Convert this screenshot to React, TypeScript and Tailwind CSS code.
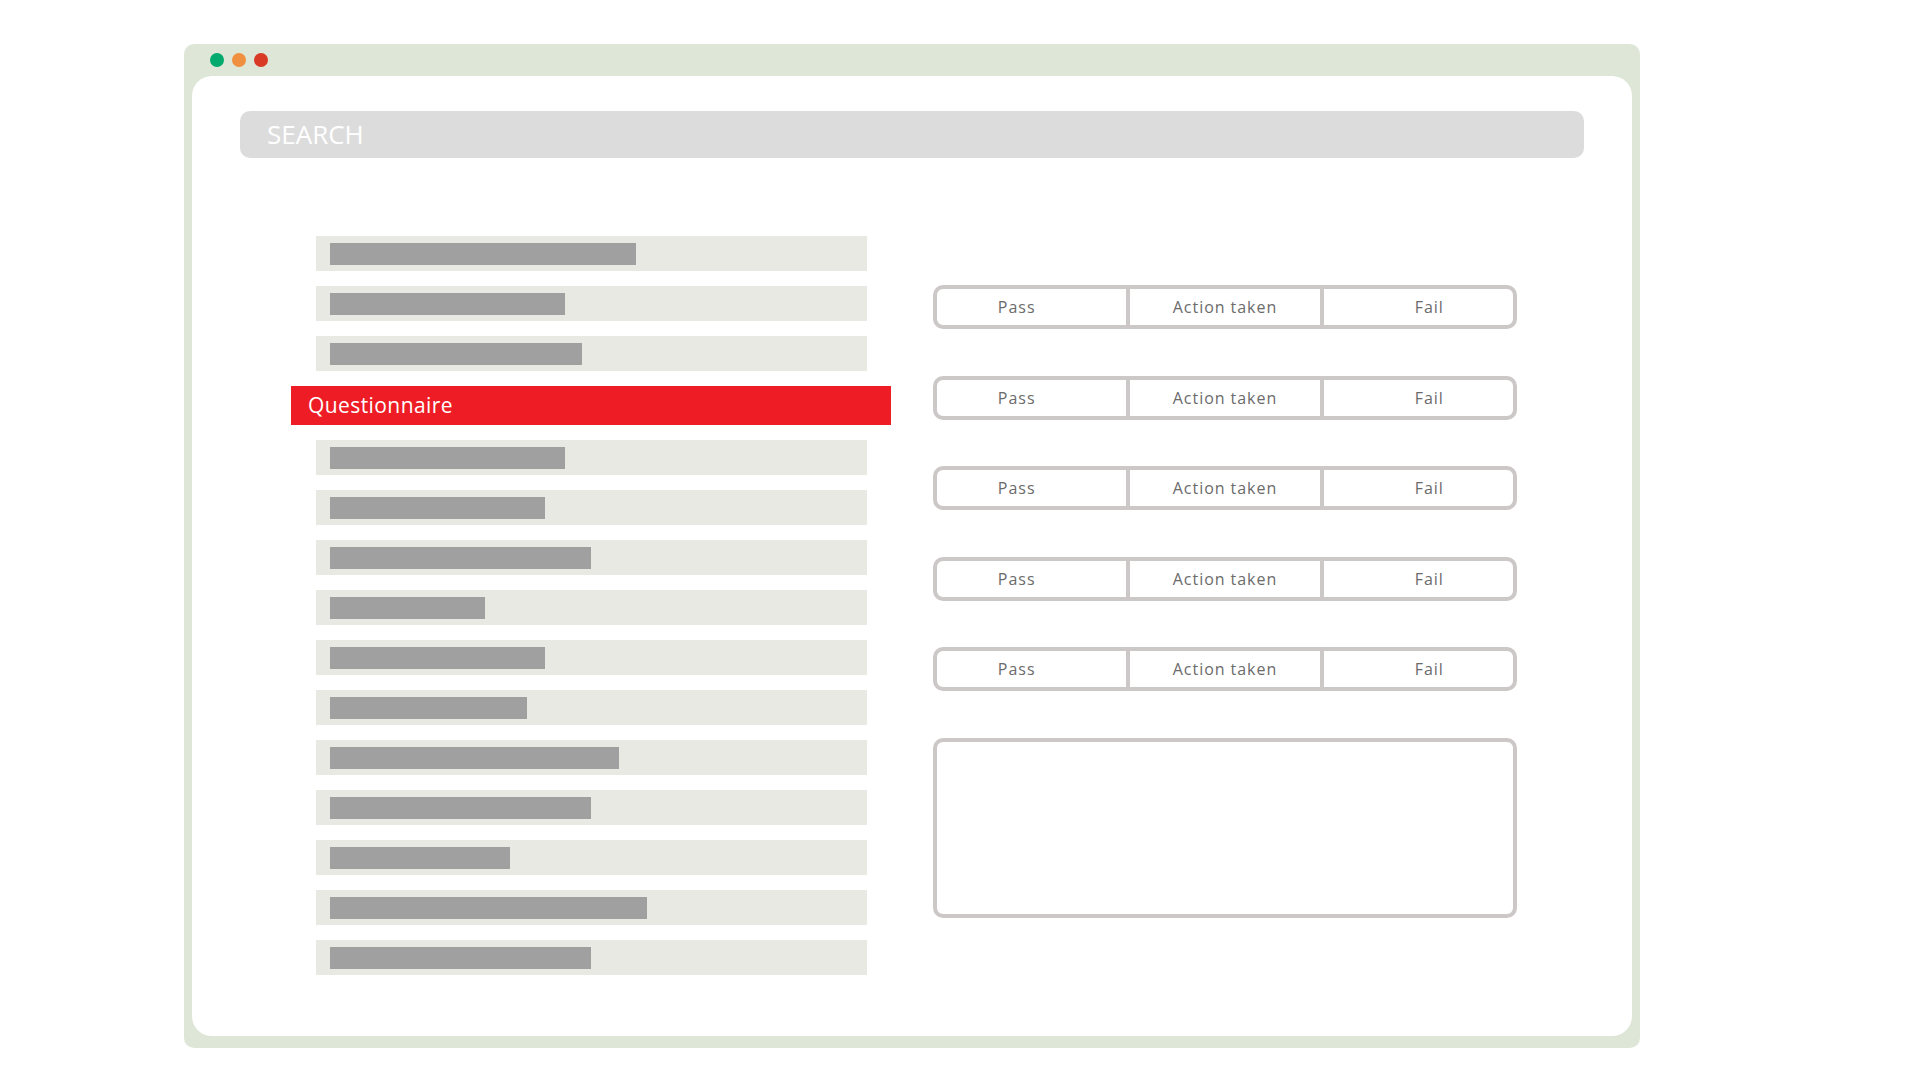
import React from 'react';

const bars = [306, 235, 252, null, 235, 215, 261, 155, 215, 197, 289, 261, 180, 317, 261];

const ListRow: React.FC<{ width: number }> = ({ width }) => (
  <div className="h-[35px] bg-[#e8e9e3] flex items-center pl-[14px]">
    <div className="h-[22px] bg-[#a0a0a0]" style={{ width }} />
  </div>
);

const Choice: React.FC = () => (
  <div className="h-[44px] flex border-4 border-[#cdc8c8] rounded-[10px] text-[16px] tracking-[0.06em] text-[#6b6b6b]">
    <div className="flex-1 min-w-0 flex items-center justify-center">
      <span className="mr-[30px]">Pass</span>
    </div>
    <div className="w-[4px] bg-[#cdc8c8]" />
    <div className="flex-1 min-w-0 flex items-center justify-center">
      <span>Action taken</span>
    </div>
    <div className="w-[4px] bg-[#cdc8c8]" />
    <div className="flex-1 min-w-0 flex items-center justify-center">
      <span className="ml-[22px]">Fail</span>
    </div>
  </div>
);

export default function App() {
  return (
    <div className="w-full h-[1080px] bg-white overflow-hidden" style={{ fontFamily: '"Open Sans", "Liberation Sans", sans-serif' }}>
      <div className="ml-[184px] mt-[44px] w-[1456px] h-[1004px] bg-[#dee7d7] rounded-[10px] flex flex-col px-[8px] pb-[12px]">
        {/* title bar */}
        <div className="h-[32px] shrink-0 flex items-center gap-[8px] pl-[18px]">
          <span className="w-[14px] h-[14px] rounded-full bg-[#03a96d]" />
          <span className="w-[14px] h-[14px] rounded-full bg-[#f08f3f]" />
          <span className="w-[14px] h-[14px] rounded-full bg-[#d83a25]" />
        </div>

        <div className="flex-1 bg-white rounded-[20px] pt-[35px] px-[48px]">
          <div className="h-[47px] bg-[#dcdcdc] rounded-[10px] flex items-center pl-[27px] text-[26px] text-white">
            SEARCH
          </div>

          <div className="mt-[78px] ml-[76px] flex gap-[66px]">
            <div className="w-[551px] flex flex-col gap-[15px]">
              {bars.map((w, i) =>
                w === null ? (
                  <div
                    key={i}
                    className="h-[39px] ml-[-25px] mr-[-24px] bg-[#ee1d25] flex items-center pl-[17px] text-white text-[21px] tracking-[0.02em]"
                  >
                    Questionnaire
                  </div>
                ) : (
                  <ListRow key={i} width={w} />
                )
              )}
            </div>

            <div className="w-[584px] mt-[49px] flex flex-col gap-[46.5px]">
              <Choice />
              <Choice />
              <Choice />
              <Choice />
              <Choice />
              <div className="h-[180px] border-4 border-[#cdc8c8] rounded-[10px]" />
            </div>
          </div>
        </div>
      </div>
    </div>
  );
}
